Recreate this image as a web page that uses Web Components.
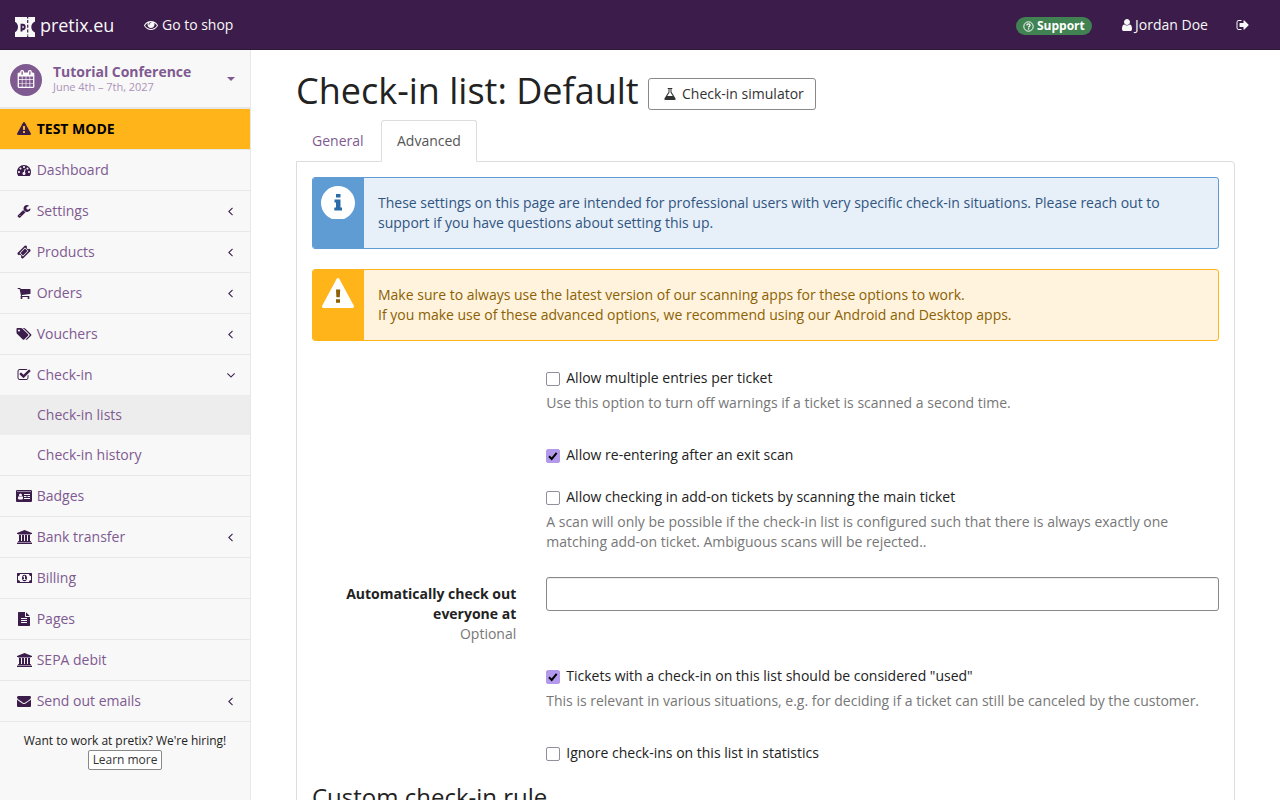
<!DOCTYPE html>
<html lang="en">
<head>
<meta charset="utf-8">
<title>Check-in list: Default</title>
<style>
html,body{margin:0;height:100%;overflow:hidden;background:#fff}
body{font:14px/20px "Open Sans","Noto Sans",sans-serif;color:#222}
</style>
</head>
<body>
<px-app></px-app>
<script>
const ICONS={
eye:[1792,'M1664 960q-152-236-381-353 61 104 61 225 0 185-131.5 316.5t-316.5 131.5-316.5-131.5-131.5-316.5q0-121 61-225-229 117-381 353 133 205 333.5 326.5t434.5 121.5 434.5-121.5 333.5-326.5zm-720-384q0-20-14-34t-34-14q-125 0-214.5 89.5t-89.5 214.5q0 20 14 34t34 14 34-14 14-34q0-86 61-147t147-61q20 0 34-14t14-34zm848 384q0 34-20 69-140 230-376.5 368.5t-499.5 138.5-499.5-139-376.5-368q-20-35-20-69t20-69q140-229 376.5-368t499.5-139 499.5 139 376.5 368q20 35 20 69z'],
user:[1792,'M1536 1399q0 109-62.5 187t-150.5 78h-854q-88 0-150.5-78t-62.5-187q0-85 8.5-160.5t31.5-152 58.5-131 94-89 134.5-34.5q131 128 313 128t313-128q76 0 134.5 34.5t94 89 58.5 131 31.5 152 8.5 160.5zm-256-887q0 159-112.5 271.5t-271.5 112.5-271.5-112.5-112.5-271.5 112.5-271.5 271.5-112.5 271.5 112.5 112.5 271.5z'],
signout:[1792,'M704 1440q0 4 1 20t.5 26.5-3 23.5-10 19.5-20.5 6.5h-320q-119 0-203.5-84.5t-84.5-203.5v-704q0-119 84.5-203.5t203.5-84.5h320q13 0 22.5 9.5t9.5 22.5q0 4 1 20t.5 26.5-3 23.5-10 19.5-20.5 6.5h-320q-66 0-113 47t-47 113v704q0 66 47 113t113 47h312l11.5 1 11.5 3 8 5.5 7 9 2 13.5zm928-544q0 26-19 45l-544 544q-19 19-45 19t-45-19-19-45v-288h-448q-26 0-45-19t-19-45v-384q0-26 19-45t45-19h448v-288q0-26 19-45t45-19 45 19l544 544q19 19 19 45z'],
calendar:[1792,'M192 1664h288v-288h-288v288zm352 0h320v-288h-320v288zm-352-352h288v-320h-288v320zm352 0h320v-320h-320v320zm-352-384h288v-288h-288v288zm736 736h320v-288h-320v288zm-384-736h320v-288h-320v288zm768 736h288v-288h-288v288zm-384-352h320v-320h-320v320zm-352-864v-288q0-13-9.5-22.5t-22.5-9.5h-64q-13 0-22.5 9.5t-9.5 22.5v288q0 13 9.5 22.5t22.5 9.5h64q13 0 22.5-9.5t9.5-22.5zm736 864h288v-320h-288v320zm-384-384h320v-288h-320v288zm384 0h288v-288h-288v288zm32-480v-288q0-13-9.5-22.5t-22.5-9.5h-64q-13 0-22.5 9.5t-9.5 22.5v288q0 13 9.5 22.5t22.5 9.5h64q13 0 22.5-9.5t9.5-22.5zm384-64v1280q0 52-38 90t-90 38h-1408q-52 0-90-38t-38-90v-1280q0-52 38-90t90-38h128v-96q0-66 47-113t113-47h64q66 0 113 47t47 113v96h384v-96q0-66 47-113t113-47h64q66 0 113 47t47 113v96h128q52 0 90 38t38 90z'],
warning:[1792,'M1024 1375v-190q0-14-9.5-23.5t-22.5-9.5h-192q-13 0-22.5 9.5t-9.5 23.5v190q0 14 9.5 23.5t22.5 9.5h192q13 0 22.5-9.5t9.5-23.5zm-2-374l18-459q0-12-10-19-13-11-24-11h-220q-11 0-24 11-10 7-10 21l17 457q0 10 10 16.5t24 6.5h185q14 0 23.5-6.5t10.5-16.5zm-14-934l768 1408q35 63-2 126-17 29-46.5 46t-63.5 17h-1536q-34 0-63.5-17t-46.5-46q-37-63-2-126l768-1408q17-31 47-49t65-18 65 18 47 49z'],
dashboard:[1792,'M384 1152q0-53-37.5-90.5t-90.5-37.5-90.5 37.5-37.5 90.5 37.5 90.5 90.5 37.5 90.5-37.5 37.5-90.5zm192-448q0-53-37.5-90.5t-90.5-37.5-90.5 37.5-37.5 90.5 37.5 90.5 90.5 37.5 90.5-37.5 37.5-90.5zm428 481l101-382q6-26-7.5-48.5t-38.5-29.5-48 6.5-30 39.5l-101 382q-60 5-107 43.5t-63 98.5q-20 77 20 146t117 89 146-20 89-117q16-60-6-117t-72-91zm660-33q0-53-37.5-90.5t-90.5-37.5-90.5 37.5-37.5 90.5 37.5 90.5 90.5 37.5 90.5-37.5 37.5-90.5zm-640-640q0-53-37.5-90.5t-90.5-37.5-90.5 37.5-37.5 90.5 37.5 90.5 90.5 37.5 90.5-37.5 37.5-90.5zm448 192q0-53-37.5-90.5t-90.5-37.5-90.5 37.5-37.5 90.5 37.5 90.5 90.5 37.5 90.5-37.5 37.5-90.5zm320 448q0 261-141 483-19 29-54 29h-1402q-35 0-54-29-141-221-141-483 0-182 71-348t191-286 286-191 348-71 348 71 286 191 191 286 71 348z'],
wrench:[1792,'M448 1472q0-26-19-45t-45-19-45 19-19 45 19 45 45 19 45-19 19-45zm644-420l-682 682q-37 37-90 37-52 0-91-37l-106-108q-38-36-38-90 0-53 38-91l681-681q39 98 114.5 173.5t173.5 114.5zm634-435q0 39-23 106-47 134-164.5 217.5t-258.5 83.5q-185 0-316.5-131.5t-131.5-316.5 131.5-316.5 316.5-131.5q58 0 121.5 16.5t107.5 46.5q16 11 16 28t-16 28l-293 169v224l193 107q5-3 79-48.5t135.5-81 70.5-35.5q15 0 23.5 10t8.5 25z'],
ticket:[1792,'M1024 452l316 316-572 572-316-316zm-211 979l618-618q19-19 19-45t-19-45l-362-362q-18-18-45-18t-45 18l-618 618q-19 19-19 45t19 45l362 362q18 18 45 18t45-18zm889-637l-907 908q-37 37-90.5 37t-90.5-37l-126-126q56-56 56-136t-56-136-136-56-136 56l-125-126q-37-37-37-90.5t37-90.5l907-906q37-37 90.5-37t90.5 37l125 125q-56 56-56 136t56 136 136 56 136-56l126 125q37 37 37 90.5t-37 90.5z'],
cart:[1792,'M704 1536q0 52-38 90t-90 38-90-38-38-90 38-90 90-38 90 38 38 90zm896 0q0 52-38 90t-90 38-90-38-38-90 38-90 90-38 90 38 38 90zm128-1088v512q0 24-16.5 42.5t-40.5 21.5l-1044 122q13 60 13 70 0 16-24 64h920q26 0 45 19t19 45-19 45-45 19h-1024q-26 0-45-19t-19-45q0-11 8-31.5t16-36 21.5-40 15.5-29.5l-177-823h-204q-26 0-45-19t-19-45 19-45 45-19h256q16 0 28.5 6.5t19.5 15.5 13 24.5 8 26 5.5 29.5 4.5 26h1201q26 0 45 19t19 45z'],
tags:[1920,'M384 448q0-53-37.5-90.5t-90.5-37.5-90.5 37.5-37.5 90.5 37.5 90.5 90.5 37.5 90.5-37.5 37.5-90.5zm1067 576q0 53-37 90l-491 492q-39 37-91 37-53 0-90-37l-715-716q-38-37-64.5-101t-26.5-117v-416q0-52 38-90t90-38h416q53 0 117 26.5t102 64.5l715 714q37 39 37 91zm384 0q0 53-37 90l-491 492q-39 37-91 37-36 0-59-14t-53-45l470-470q37-37 37-90 0-52-37-91l-715-714q-38-38-102-64.5t-117-26.5h224q53 0 117 26.5t102 64.5l715 714q37 39 37 91z'],
checksq:[1792,'M1472 930v318q0 119-84.5 203.5t-203.5 84.5h-832q-119 0-203.5-84.5t-84.5-203.5v-832q0-119 84.5-203.5t203.5-84.5h832q63 0 117 25 15 7 18 23 3 17-9 29l-49 49q-10 10-23 10-3 0-9-2-23-6-45-6h-832q-66 0-113 47t-47 113v832q0 66 47 113t113 47h832q66 0 113-47t47-113v-254q0-13 9-22l64-64q10-10 23-10 6 0 12 3 20 8 20 29zm231-489l-814 814q-24 24-57 24t-57-24l-430-430q-24-24-24-57t24-57l110-110q24-24 57-24t57 24l263 263 647-647q24-24 57-24t57 24l110 110q24 24 24 57t-24 57z'],
idcard:[2048,'M896 1196q0-54-7.5-100.5t-24.5-90-51-68.5-81-25q-64 64-156 64t-156-64q-47 0-81 25t-51 68.5-24.5 90-7.5 100.5q0 55 31.5 93.5t75.5 38.5h426q44 0 75.5-38.5t31.5-93.5zm-128-428q0-80-56-136t-136-56-136 56-56 136 56 136 136 56 136-56 56-136zm1024 512v-128h-768v128zm0-256v-128h-320v128zm-448 0v-128h-320v128zm448-256v-128h-768v128zm128-384v-64h-1792v64zm128-96v1216q0 66-47 113t-113 47h-1728q-66 0-113-47t-47-113v-1216q0-66 47-113t113-47h1728q66 0 113 47t47 113z'],
bank:[1920,'M960 0l960 384v128h-128q0 26-20.5 45t-48.5 19h-1526q-28 0-48.5-19t-20.5-45h-128v-128zm-704 640h256v768h128v-768h256v768h128v-768h256v768h128v-768h256v768h59q28 0 48.5 19t20.5 45v64h-1664v-64q0-26 20.5-45t48.5-19h59v-768zm1595 960q28 0 48.5 19t20.5 45v128h-1920v-128q0-26 20.5-45t48.5-19h1782z'],
money:[1920,'M768 1152h384v-96h-128v-448h-114l-148 137 77 80q42-37 55-57h2v288h-128v96zm512-256q0 70-21 142t-59.5 134-101.5 101-138 39-138-39-101.5-101-59.5-134-21-142 21-142 59.5-134 101.5-101 138-39 138 39 101.5 101 59.5 134 21 142zm512 256v-512q-106 0-181-75t-75-181h-1152q0 106-75 181t-181 75v512q106 0 181 75t75 181h1152q0-106 75-181t181-75zm128-832v1152q0 26-19 45t-45 19h-1792q-26 0-45-19t-19-45v-1152q0-26 19-45t45-19h1792q26 0 45 19t19 45z'],
file:[1792,'M1596 476q14 14 28 36h-472v-472q22 14 36 28zm-476 164h544v1056q0 40-28 68t-68 28h-1344q-40 0-68-28t-28-68v-1600q0-40 28-68t68-28h800v544q0 40 28 68t68 28zm160 736v-64q0-14-9-23t-23-9h-704q-14 0-23 9t-9 23v64q0 14 9 23t23 9h704q14 0 23-9t9-23zm0-256v-64q0-14-9-23t-23-9h-704q-14 0-23 9t-9 23v64q0 14 9 23t23 9h704q14 0 23-9t9-23zm0-256v-64q0-14-9-23t-23-9h-704q-14 0-23 9t-9 23v64q0 14 9 23t23 9h704q14 0 23-9t9-23z'],
envelope:[1792,'M1792 710v794q0 66-47 113t-113 47h-1472q-66 0-113-47t-47-113v-794q44 49 101 87 362 246 497 345 57 42 92.5 65.5t94.5 48 110 24.5h2q51 0 110-24.5t94.5-48 92.5-65.5q170-123 498-345 57-39 100-87zm0-294q0 79-49 151t-122 123q-376 261-468 325-10 7-42.5 31t-54 38.5-52 32.5-57.5 27-50 9h-2q-23 0-50-9t-57.5-27-52-32.5-54-38.5-42.5-31q-91-64-262-182.5t-205-142.5q-62-42-117-115.5t-55-136.5q0-78 41.5-130t118.5-52h1472q65 0 112.5 47t47.5 113z'],
flask:[1792,'M1591 1448q56 89 21.5 152.5t-140.5 63.5h-1152q-106 0-140.5-63.5t21.5-152.5l503-793v-399h-64q-26 0-45-19t-19-45 19-45 45-19h512q26 0 45 19t19 45-19 45-45 19h-64v399zm-779-725l-272 429h712l-272-429-20-31v-436h-128v436z'],
left:[1792,'M1123 544q0 13-10 23l-393 393 393 393q10 10 10 23t-10 23l-50 50q-10 10-23 10t-23-10l-466-466q-10-10-10-23t10-23l466-466q10-10 23-10t23 10l50 50q10 10 10 23z'],
down:[1792,'M1395 736q0 13-10 23l-466 466q-10 10-23 10t-23-10l-466-466q-10-10-10-23t10-23l50-50q10-10 23-10t23 10l393 393 393-393q10-10 23-10t23 10l50 50q10 10 10 23z']
};
function define(name,css,html){
  customElements.define(name,class extends HTMLElement{
    constructor(){
      super();
      const t=document.createElement('template');
      t.innerHTML=`<style>*{box-sizing:border-box}${css}</style>${typeof html==='function'?html(this):html}`;
      this.attachShadow({mode:'open'}).append(t.content.cloneNode(true));
    }
  });
}
define('px-icon',':host{display:block;flex:none}svg{display:block;fill:currentColor;overflow:visible}',el=>{
  const [w,d]=ICONS[el.getAttribute('name')],s=+(el.getAttribute('size')||14);
  return `<svg width="${w/1792*s}" height="${s}" viewBox="0 0 ${w} 1792"><path d="${d}"/></svg>`;
});
define('px-topbar',`:host{display:flex;height:50px;background:#3b1c4a;color:#f8f8f8;border-bottom:1px solid #2f163b;padding:0 15px}
a{display:flex;align-items:center;height:50px}
.brand{font-size:18px;gap:5px;width:99px;white-space:nowrap;letter-spacing:-.06px}.brand svg{margin-top:4px;flex:none}
.shop{margin-left:30px;gap:4px;letter-spacing:-.02px}
.right{margin-left:auto;display:flex}
.badge{display:flex;align-items:center;gap:2px;height:18px;width:76px;margin:17px 29px 0 0;padding:0 0 0 7px;border-radius:9px;background:#408252;color:#fff;font-size:12px;font-weight:700;line-height:18px}
.user{gap:1px;margin-right:28px;width:88px;margin-left:-1px;white-space:nowrap}.out{margin-right:15px}`,
`<a class="brand"><svg width="20" height="20" viewBox="0 0 20 20"><path fill="#f8f8f8" d="M0 0h12v1.500h1.300V0H20v4.500a6 6 0 0 0-3.700 5.500 6 6 0 0 0 3.700 5.500V20h-6.700v-1.500H12V20H0v-4.800c2-1.200 3-3 3-5.200s-1-4-3-5.200z"/><path fill="none" stroke="#3b1c4a" stroke-width="1.200" stroke-dasharray="3 1.800" d="M12.700 3v15"/><path fill="none" stroke="#3b1c4a" stroke-width="1.900" d="M6.500 14.500V7.800h1.300q1.900 0 1.900 2.200t-1.900 2.200H6.500"/></svg><span>pretix.eu</span></a>
<a class="shop"><px-icon name="eye"></px-icon><span>Go to shop</span></a>
<div class="right"><span class="badge"><svg width="12" height="12" viewBox="0 0 12 12" fill="none" stroke="#fff"><circle cx="5.500" cy="6.500" r="4.700"/><path stroke-width="1.300" d="M3.800 5.400q.2-1.500 1.700-1.500t1.600 1.300c0 1.100-1.500 1-1.500 2.300M5.600 8.300v1.200"/></svg><span>Support</span></span>
<a class="user"><px-icon name="user"></px-icon><span>Jordan Doe</span></a><a class="out"><px-icon name="signout"></px-icon></a></div>`);
define('px-event',`:host{display:flex;height:59px;border-bottom:2px solid #e7e7e7;padding:0 15px 0 10px;color:#7f5a91;align-items:center}
.disc{width:32px;height:32px;margin:2px 11px 0 0;border-radius:50%;background:#7f5a91;color:#fff;display:grid;place-items:center}
.disc px-icon{margin-top:-2px}
.text{flex:1;line-height:15px;letter-spacing:-.03px}b{display:block;line-height:18px;margin-top:-1px}small{display:block;font-size:11px;line-height:12px;color:#ac93b8}
i{border:4px solid transparent;border-top-color:currentColor;border-bottom:0;margin-top:1px}`,
`<span class="disc"><px-icon name="calendar" size="18"></px-icon></span><span class="text"><b>Tutorial Conference</b><small>June 4th – 7th, 2027</small></span><i></i>`);
define('px-nav-item',`:host{display:flex;align-items:center;height:41px;border-bottom:1px solid #e7e7e7;padding:0 12.500px 0 15px;color:#7f5a91}
:host([open]){height:40px;border:0}
:host([test]){background:#ffb419;color:#000;font-weight:700}
:host([sub]){height:40px;border:0;padding-left:37px}:host([sub][active]){background:#ededed}:host([sub][last]){height:41px;border-bottom:1px solid #e7e7e7}
.ico{width:18px;margin-right:3.700px;display:flex;justify-content:center;color:#3b1c4a}
.t{flex:1}.arrow{color:#3b1c4a}`,
el=>{const n=el.getAttribute('icon');return `${n?`<span class="ico"><px-icon name="${n}"></px-icon></span>`:''}<span class="t"><slot></slot></span>${el.hasAttribute('arrow')?`<px-icon class="arrow" name="${el.hasAttribute('open')?'down':'left'}"></px-icon>`:''}`});
define('px-sidebar',`:host{display:block;width:251px;background:#f8f8f8;border-right:1px solid #e7e7e7}
.hire{text-align:center;font-size:12px;line-height:18px;padding-top:10px;color:#222;letter-spacing:-.03px}
.hire a{display:inline-block;border:1px solid #888;border-radius:2px;background:#fff;color:#333;width:74px;line-height:18px;vertical-align:top}`,
`<px-event></px-event><px-nav-item test icon="warning">TEST MODE</px-nav-item><px-nav-item icon="dashboard">Dashboard</px-nav-item><px-nav-item icon="wrench" arrow>Settings</px-nav-item><px-nav-item icon="ticket" arrow>Products</px-nav-item><px-nav-item icon="cart" arrow>Orders</px-nav-item><px-nav-item icon="tags" arrow>Vouchers</px-nav-item><px-nav-item icon="checksq" arrow open>Check-in</px-nav-item><px-nav-item sub active>Check-in lists</px-nav-item><px-nav-item sub last>Check-in history</px-nav-item><px-nav-item icon="idcard">Badges</px-nav-item><px-nav-item icon="bank" arrow>Bank transfer</px-nav-item><px-nav-item icon="money">Billing</px-nav-item><px-nav-item icon="file">Pages</px-nav-item><px-nav-item icon="bank">SEPA debit</px-nav-item><px-nav-item icon="envelope" arrow>Send out emails</px-nav-item>
<div class="hire"><div>Want to work at pretix? We're hiring!</div><a>Learn more</a></div>`);
define('px-alert',`:host{display:flex;min-height:72px;margin-bottom:20px;border:1px solid #5f9cd4;border-radius:3px;background:#e7eff9;color:#30557f;overflow:hidden}
:host([kind=warning]){border-color:#ffb419;background:#fff3dd;color:#8b6103}
.side{flex:none;width:51px;background:#5f9cd4;padding:7px 0 0 8px}:host([kind=warning]) .side{background:#ffb419}
svg{display:block}.body{padding:15px 14px}`,
el=>`<div class="side">${el.getAttribute('kind')==='warning'?
'<svg width="34" height="34" viewBox="0 0 34 34"><path fill="#fff" stroke="#fff" stroke-width="3" stroke-linejoin="round" d="M17 2.500L31.500 29.500H2.500z"/><path fill="#8b6103" d="M15 12.500h4.200l-.4 7.800h-3.400zM15 22.200h4v3.600h-4z"/></svg>':
'<svg width="34" height="34" viewBox="0 0 34 34"><circle cx="17" cy="18" r="17" fill="#fff"/><path fill="#2b6ba8" d="M15 9h4.500v3.500H15zM13.500 14.500h6v8h1.500v3h-7.700v-3H15v-5h-1.500z"/></svg>'}</div><div class="body"><slot></slot></div>`);
define('px-check',`:host{display:block;margin-left:234.250px}
.l{display:flex;gap:6px;height:20px}
i{flex:none;width:14px;height:14px;margin-top:4px;border:1px solid #8f8f9d;border-radius:2px;background:#fff}
:host([on]) i{background:#b399ec;border-color:#b399ec}
svg{display:block;width:12px;height:12px}p{margin:5px 0 0;color:#777}`,
el=>`<div class="l"><i>${el.hasAttribute('on')?'<svg viewBox="0 0 12 12"><path d="M2 6.300l2.700 2.700L9.700 2.800" fill="none" stroke="#000" stroke-width="2"/></svg>':''}</i><span><slot></slot></span></div>${el.hasAttribute('help')?`<p>${el.getAttribute('help')}</p>`:''}`);
define('px-field',`:host{display:grid;grid-template-columns:204.250px 673px;gap:29.750px;margin-top:25px}
.lab{text-align:right;padding-top:7px;font-weight:700}.lab small{font-size:14px;font-weight:400;color:#777;display:block}
input{display:block;width:673px;height:34px;border:1px solid #888;border-radius:3px;box-shadow:inset 0 1px 1px #00000013;background:#fff}`,
`<div class="lab"><slot></slot><small>Optional</small></div><input type="text" aria-label="Automatically check out everyone at">`);
define('px-main',`:host{display:block;flex:1;padding:21px 45px 0;min-width:0}
header{display:flex;height:49px}h1{margin:0;font-size:36px;font-weight:400;line-height:40px;width:342px;white-space:nowrap}
.btn{display:flex;align-items:center;gap:5px;height:32px;width:168px;white-space:nowrap;margin:7px 0 0 10px;padding:0 0 0 14px;border:1px solid #888;border-radius:3px;color:#333}
nav{display:flex;gap:2px;margin-bottom:-1px}nav a{height:42px;width:83px;padding:10px 15px;border:1px solid transparent;color:#7f5a91}
nav .on{width:96px;color:#555;border-color:#ddd;border-bottom-color:#fff;background:#fff;border-radius:3px 3px 0 0;position:relative}
.panel{width:939px;height:700px;border:1px solid #ddd;border-radius:0 4px 0 0;padding:15px}
h2{font-size:24px;font-weight:400;line-height:26px;margin:21px 0 0}`,
`<header><h1>Check-in list: Default</h1><a class="btn"><px-icon name="flask"></px-icon><span>Check-in simulator</span></a></header>
<nav><a>General</a><a class="on">Advanced</a></nav>
<section class="panel"><px-alert>These settings on this page are intended for professional users with very specific check-in situations. Please reach out to support if you have questions about setting this up.</px-alert>
<px-alert kind="warning">Make sure to always use the latest version of our scanning apps for these options to work.<br>If you make use of these advanced options, we recommend using our Android and Desktop apps.</px-alert>
<px-check style="margin-top:27px" help="Use this option to turn off warnings if a ticket is scanned a second time.">Allow multiple entries per ticket</px-check>
<px-check on style="margin-top:32px">Allow re-entering after an exit scan</px-check>
<px-check style="margin-top:22px" help="A scan will only be possible if the check-in list is configured such that there is always exactly one matching add-on ticket. Ambiguous scans will be rejected..">Allow checking in add-on tickets by scanning the main ticket</px-check>
<px-field>Automatically check out everyone at</px-field>
<px-check on style="margin-top:22px" help="This is relevant in various situations, e.g. for deciding if a ticket can still be canceled by the customer.">Tickets with a check-in on this list should be considered "used"</px-check>
<px-check style="margin-top:32px">Ignore check-ins on this list in statistics</px-check>
<h2>Custom check-in rule</h2></section>`);
define('px-app',':host{display:flex;flex-direction:column;height:100vh;overflow:hidden}.cols{display:flex;flex:1;min-height:0}',
'<px-topbar></px-topbar><div class="cols"><px-sidebar></px-sidebar><px-main></px-main></div>');
</script>
</body>
</html>
